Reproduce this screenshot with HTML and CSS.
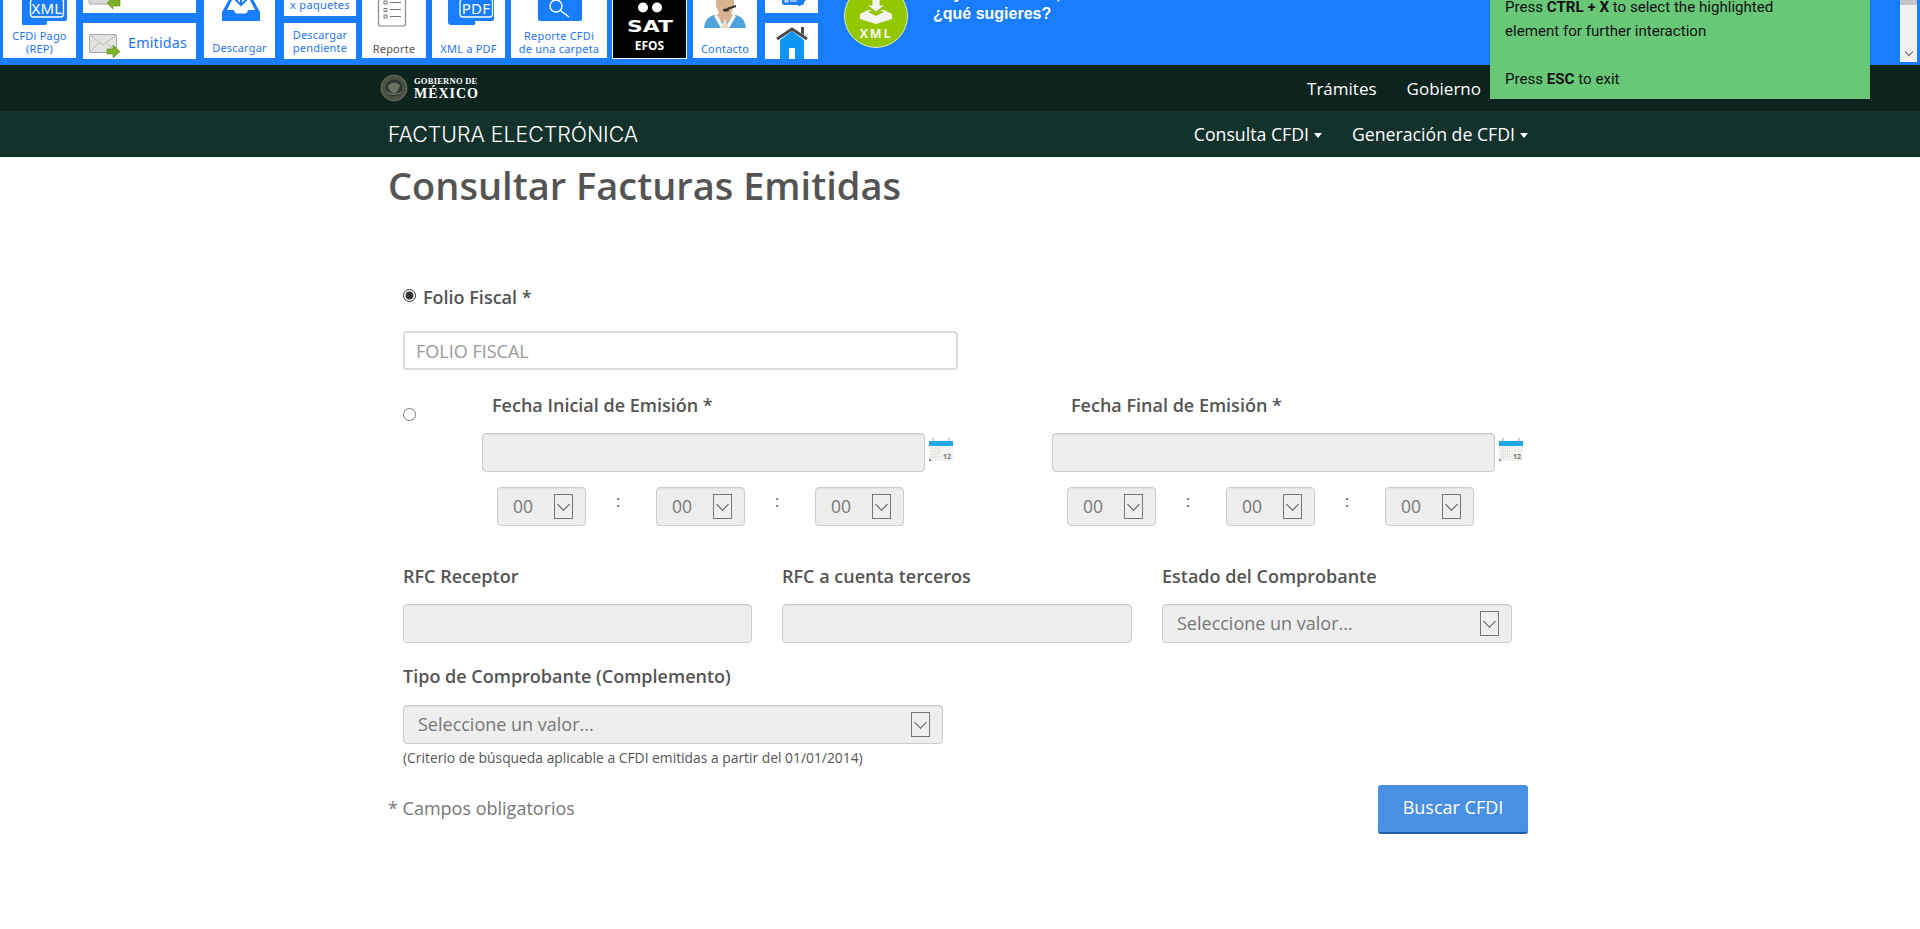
FILE: index.html
```html
<!DOCTYPE html>
<html lang="es">
<head>
<meta charset="utf-8">
<title>Consultar Facturas Emitidas</title>
<link rel="stylesheet" href="styles.css">
</head>
<body>
<header class="strip">
  <a class="tile w73 ml3">
    <svg class="ico" width="73" height="29" viewBox="0 0 73 29"><path class="bl" d="M20 -8h42a2 2 0 0 1 2 2v25a2 2 0 0 1-2 2H44v2a2 2 0 0 1-2 2H22a2 2 0 0 1-3-2V-6a2 2 0 0 1 1-2z"/><rect x="27.5" y="-1" width="33" height="18" rx="3" fill="none" stroke="#fff" stroke-width="1.3"/><text x="44" y="14" class="t-ico">XML</text></svg>
    <span class="lab">CFDi Pago<br>(REP)</span>
  </a>
  <div class="stack w113 ml7">
    <div class="box h13">
      <svg width="113" height="13" viewBox="0 0 113 13"><rect x="6" y="-12" width="27" height="16" rx="1" fill="#d8d8d4" stroke="#aaa"/><path d="M24 3l6-6v3h7v6h-7v3z" fill="#7fb32a" stroke="#5a8a1c" stroke-width=".6"/></svg>
    </div>
    <div class="box h36 rowbox">
      <svg width="37" height="24" viewBox="0 0 37 24"><rect x=".5" y=".5" width="27" height="18" rx="1" fill="#e2e2de" stroke="#aaa"/><path d="M1 1l13 10L27 1M1 18l9-9M27 18l-9-9" fill="none" stroke="#bbb"/><path d="M18 15h6v-4l7 6.500-7 6.500v-4h-6z" fill="#7fb32a" stroke="#5a8a1c" stroke-width=".6"/></svg>
      <span class="lab-big">Emitidas</span>
    </div>
  </div>
  <a class="tile w71 ml8">
    <svg class="ico" width="71" height="41" viewBox="0 0 71 41"><path class="bl" d="M18 12L28-6h18l10 18v9H18z"/><path d="M23 10L31-6h12l8 16h-7c-.5 2.500-1.500 3.500-3 3.500h-8c-1.500 0-2.500-1-3-3.500z" fill="#fff"/><path d="M31-1l6 6 6-6" fill="none" stroke="#187EFF" stroke-width="2"/><path d="M37-6v10" stroke="#187EFF" stroke-width="2"/></svg>
    <span class="lab pb4">Descargar</span>
  </a>
  <div class="stack w72 ml9">
    <div class="box h16 clab">x paquetes</div>
    <div class="box h36 clab2">Descargar<br>pendiente</div>
  </div>
  <a class="tile w64 ml6">
    <svg class="ico" width="64" height="42" viewBox="0 0 64 42"><rect x="16.500" y="-10" width="27" height="36" rx="2" fill="#fff" stroke="#888" stroke-width="1.200"/><path d="M22 1h3v3h-3zM22 8.500h3v3h-3zM22 15h3v3h-3z" fill="none" stroke="#777"/><path d="M28 2.500h11M28 9.500h11M28 16.500h11" stroke="#777" stroke-width="1.200"/></svg>
    <span class="lab gray">Reporte</span>
  </a>
  <a class="tile w73 ml6">
    <svg class="ico" width="73" height="42" viewBox="0 0 73 42"><path class="bl" d="M18-8h42a2 2 0 0 1 2 2v25a2 2 0 0 1-2 2H43v1a2 2 0 0 1-2 3H19a3 3 0 0 1-3-2V-6a2 2 0 0 1 2-2z"/><rect x="28" y="-1" width="32.500" height="18" rx="3" fill="none" stroke="#fff" stroke-width="1.300"/><text x="44" y="14" class="t-ico">PDF</text></svg>
    <span class="lab">XML a PDF</span>
  </a>
  <a class="tile w96 ml6">
    <svg class="ico" width="96" height="29" viewBox="0 0 96 29"><rect class="bl" x="27" y="-8" width="44" height="29" rx="2"/><circle cx="45" cy="6" r="6" fill="none" stroke="#fff" stroke-width="1.400"/><path d="M49.500 10.500L58 17" stroke="#fff" stroke-width="1.500"/></svg>
    <span class="lab">Reporte CFDi<br>de una carpeta</span>
  </a>
  <a class="tile sat ml5">
    <svg class="ico" width="73" height="26" viewBox="0 0 73 26"><circle cx="30" cy="1" r="5" fill="#fff"/><circle cx="44" cy="1" r="5" fill="#fff"/><text x="37" y="25" class="t-sat" textLength="46" lengthAdjust="spacingAndGlyphs">SAT</text></svg>
    <span class="efos">EFOS</span>
  </a>
  <a class="tile w64 ml6">
    <svg class="ico" width="64" height="42" viewBox="0 0 64 42"><path d="M11 28c1-8 4-11 10-13l11 3 11-3c6 2 9 5 10 13z" fill="#4ea3dc"/><path d="M23 -2h18v8l-3 7 3 3-9 8-9-8 3-3-3-7z" fill="#d8b28e"/><path d="M24 15l8 13 8-13 3 1-7 12H28l-7-12z" fill="#fff"/><path d="M28 28l4-10 4 10z" fill="#eed6bd"/><path d="M34 9l9-3" stroke="#333" stroke-width="2" fill="none"/><ellipse cx="33" cy="10" rx="3" ry="1.500" fill="#333"/></svg>
    <span class="lab">Contacto</span>
  </a>
  <div class="stack w53 ml8">
    <div class="box h13">
      <svg width="53" height="13" viewBox="0 0 53 13"><path class="bl" d="M17-8h22v11a2 2 0 0 1-2 2H19a2 2 0 0 1-2-2z"/><path d="M20 0h3v2h-3zM25 1h7" stroke="#fff" fill="none"/><path d="M33 6l7-11 3 3-8 8z" class="bl"/></svg>
    </div>
    <div class="box h36 nopad">
      <svg width="53" height="36" viewBox="0 0 53 36"><path d="M12 16L27 6l15 10" fill="none" stroke="#4a4a4a" stroke-width="3"/><path d="M36 4h3v8l-3-2z" fill="#4a4a4a"/><path d="M27 8L15 17v19h9V25h6v11h9V17z" fill="#0b95f5"/></svg>
    </div>
  </div>
  <div class="xml-badge">
    <svg width="60" height="60" viewBox="0 0 60 60"><path d="M14 28l8-4h16l8 4v5l-16 5-16-5z" fill="#f3f3f3"/><path d="M22 26l8 4 8-4-4-2h-8z" fill="#93c800"/><path d="M26 12h8v7h5l-9 7-9-7h5z" fill="#f3f3f3" stroke="#93c800"/><text x="30" y="52" class="t-xml">XML</text></svg>
  </div>
  <p class="suggest">Hay un error ahí,<br>¿qué sugieres?</p>
  <div class="scroll"><span class="thumb"></span><span class="chev"></span></div>
</header>

<div class="tooltip">
  <p>Press <b>CTRL + X</b> to select the highlighted</p>
  <p>element for further interaction</p>
  <p>&nbsp;</p>
  <p>Press <b>ESC</b> to exit</p>
</div>

<nav class="bar-top">
  <div class="inner">
    <a class="brand">
      <svg width="28" height="28" viewBox="0 0 28 28"><circle cx="14" cy="14" r="13.500" fill="#4b5243"/><circle cx="14" cy="14" r="12.500" fill="none" stroke="#8e947e" stroke-dasharray="1 1.500"/><circle cx="14" cy="14" r="8.500" fill="#2b362c"/><path d="M8 12c3-4 8-5 12-1-1 5-3 8-6 8s-5-3-6-7z" fill="#6d7361"/><path d="M7 18c4 3 10 3 14 0" stroke="#8e947e" fill="none"/></svg>
      <span class="brand-txt"><span class="b1">GOBIERNO DE</span><span class="b2">MÉXICO</span></span>
    </a>
    <div class="links"><a>Trámites</a><a>Gobierno</a></div>
  </div>
</nav>
<nav class="bar-sub">
  <div class="inner">
    <a class="title">FACTURA ELECTRÓNICA</a>
    <div class="links l2"><a class="caret">Consulta CFDI</a><a class="caret">Generación de CFDI</a></div>
  </div>
</nav>

<main class="page">
  <h1>Consultar Facturas Emitidas</h1>
  <form class="form">
    <div class="radio-row">
      <input type="radio" name="mode" checked>
      <label class="lbl lb0">Folio Fiscal *</label>
    </div>
    <input class="field folio" type="text" placeholder="FOLIO FISCAL">

    <div class="date-grid">
      <input class="radio2" type="radio" name="mode">
      <div class="date-col">
        <label class="lbl lb1">Fecha Inicial de Emisión *</label>
        <div class="date-line">
          <div class="field off"></div>
          <svg class="cal" width="24" height="23" viewBox="0 0 24 23"><rect y="3" width="24" height="20" fill="#f2f2ee"/><rect y="3" width="24" height="5" fill="#1fa8f0"/><path d="M4 0v4M20 0v4" stroke="#999"/><path d="M2 10h9M2 13h9M2 16h9M2 19h9" stroke="#ccc" stroke-dasharray="1 1"/><text x="18" y="21" class="t-cal">12</text><path d="M0 20l3 3H0z" fill="#888"/></svg>
        </div>
        <div class="time-row">
          <div class="select"><span>00</span><i class="arr"></i></div><b class="colon">:</b>
          <div class="select"><span>00</span><i class="arr"></i></div><b class="colon">:</b>
          <div class="select"><span>00</span><i class="arr"></i></div>
        </div>
      </div>
      <div class="date-col">
        <label class="lbl lb2">Fecha Final de Emisión *</label>
        <div class="date-line">
          <div class="field off"></div>
          <svg class="cal" width="24" height="23" viewBox="0 0 24 23"><rect y="3" width="24" height="20" fill="#f2f2ee"/><rect y="3" width="24" height="5" fill="#1fa8f0"/><path d="M4 0v4M20 0v4" stroke="#999"/><path d="M2 10h9M2 13h9M2 16h9M2 19h9" stroke="#ccc" stroke-dasharray="1 1"/><text x="18" y="21" class="t-cal">12</text><path d="M0 20l3 3H0z" fill="#888"/></svg>
        </div>
        <div class="time-row">
          <div class="select"><span>00</span><i class="arr"></i></div><b class="colon">:</b>
          <div class="select"><span>00</span><i class="arr"></i></div><b class="colon">:</b>
          <div class="select"><span>00</span><i class="arr"></i></div>
        </div>
      </div>
    </div>

    <div class="three">
      <div><label class="lbl">RFC Receptor</label><div class="field off mt15"></div></div>
      <div><label class="lbl">RFC a cuenta terceros</label><div class="field off mt15"></div></div>
      <div><label class="lbl">Estado del Comprobante</label><div class="select wide mt15"><span>Seleccione un valor...</span><i class="arr"></i></div></div>
    </div>

    <div class="tipo">
      <label class="lbl">Tipo de Comprobante (Complemento)</label>
      <div class="select wide mt16"><span>Seleccione un valor...</span><i class="arr"></i></div>
    </div>
    <p class="note">(Criterio de búsqueda aplicable a CFDI emitidas a partir del 01/01/2014)</p>
  </form>
  <div class="foot">
    <span class="req">* Campos obligatorios</span>
    <button class="btn" type="button">Buscar CFDI</button>
  </div>
</main>
</body>
</html>
```
FILE: styles.css
```css
* { box-sizing: border-box; }
html, body { margin: 0; padding: 0; background: #fff; }
body { font-family: "Open Sans", "Noto Sans", sans-serif; color: #545454; height: 929px; overflow: hidden; position: relative; }
p { margin: 0; }

/* top toolbar */
.strip { display: flex; align-items: flex-start; height: 65px; background: #187EFF; position: relative; overflow: hidden; }
.bl { fill: #187EFF; }
.tile { display: flex; flex-direction: column; height: 58px; background: #fff; flex: none; overflow: hidden; }
.ico { display: block; flex: 1 0 auto; }
.lab { font: 11px/13px "Noto Sans", sans-serif; color: #1f74f5; text-align: center; padding-bottom: 3px; letter-spacing: .2px; white-space: nowrap; }
.lab.pb4 { padding-bottom: 4px; }
.lab.gray { color: #59514d; }
.stack { display: flex; flex-direction: column; justify-content: space-between; height: 59px; flex: none; }
.box { background: #fff; overflow: hidden; }
.box svg { display: block; }
.h13 { height: 13px; }
.h16 { height: 16px; margin-bottom: 7px; }
.h36 { height: 36px; margin-top: auto; }
.rowbox { display: flex; align-items: flex-start; padding: 11px 0 0 6px; }
.lab-big { font: 14.300px/18px "Noto Sans", sans-serif; color: #1f74f5; margin-left: 2px; letter-spacing: .2px; }
.clab { font: 11px/10px "Noto Sans", sans-serif; color: #1f74f5; text-align: center; letter-spacing: .3px; }
.clab2 { font: 11px/13px "Noto Sans", sans-serif; color: #1f74f5; text-align: center; padding-top: 5px; letter-spacing: .2px; }
.w53 { width: 53px; } .w64 { width: 64px; } .w71 { width: 71px; } .w72 { width: 72px; }
.w73 { width: 73px; } .w96 { width: 96px; } .w113 { width: 113px; }
.ml3 { margin-left: 3px; } .ml5 { margin-left: 5px; } .ml6 { margin-left: 6px; } .ml7 { margin-left: 7px; } .ml8 { margin-left: 8px; } .ml9 { margin-left: 9px; }
.t-ico { font: 15px "Noto Sans", sans-serif; fill: #fff; text-anchor: middle; letter-spacing: .2px; }
.sat { width: 75px; height: 59px; background: #000; border: 1px solid #fff; border-top: 0; }
.t-sat { font: 900 15px "DejaVu Sans", sans-serif; fill: #fff; text-anchor: middle; }
.efos { font: 700 12px/14px "Noto Sans", sans-serif; color: #fff; text-align: center; padding-bottom: 5px; }
.xml-badge { position: relative; width: 64px; height: 64px; margin: -16px 0 0 26px; flex: none; border-radius: 50%; background: #93c800; border: 1px solid #dfe9b8; display: flex; align-items: center; justify-content: center; }
.t-xml { font: 700 12.500px "Open Sans", sans-serif; fill: #f6f6f6; text-anchor: middle; letter-spacing: 1.800px; }
.suggest { font: 700 16px/20px "Liberation Sans", Arial, sans-serif; color: #fff; margin: -16px 0 0 25px; white-space: nowrap; }
.scroll { width: 17px; height: 62px; background: #f1f1f1; margin-left: auto; margin-right: 3px; flex: none; display: flex; flex-direction: column; justify-content: space-between; align-items: center; padding-bottom: 7px; }
.thumb { width: 17px; height: 5px; background: #c4c4c4; }
.chev { width: 6px; height: 6px; border-right: 1.500px solid #666; border-bottom: 1.500px solid #666; transform: rotate(45deg); }

/* overlay tooltip */
.tooltip { position: absolute; z-index: 5; left: 1490px; top: 0; width: 380px; height: 99px; background: #69c778; padding: 0 15px 8px; display: flex; flex-direction: column; justify-content: flex-end; overflow: hidden; font: 15.100px/24px "Roboto", sans-serif; color: #111; }
.tooltip b { font-weight: 700; }

/* nav bars */
.inner { width: 1140px; margin-left: 388px; height: 100%; display: flex; align-items: center; justify-content: space-between; }
.bar-top { height: 46px; background: #0C231E; }
.bar-sub { height: 46px; background: #13322B; }
.links { display: flex; gap: 30px; font-size: 17px; color: #fff; padding-right: 47px; }
.links.l2 { padding-right: 0; font-size: 17.700px; }
.brand { display: flex; align-items: center; gap: 6px; margin-left: -8px; }
.brand svg { display: block; }
.brand-txt { display: flex; flex-direction: column; font-family: "Liberation Serif", serif; font-weight: 700; color: #fff; }
.b1 { font-size: 8.500px; line-height: 11px; letter-spacing: .25px; }
.b2 { font-size: 14px; line-height: 13px; letter-spacing: .95px; }
.title { font: 300 21.300px/24px "Inter", sans-serif; color: #fff; }
.caret::after { content: ""; display: inline-block; margin-left: 5px; vertical-align: 3px; border-top: 5px solid #fff; border-left: 4px solid transparent; border-right: 4px solid transparent; }

/* page */
.page { width: 1140px; margin-left: 388px; }
h1 { margin: 5px 0 0; font-size: 38px; line-height: 46px; font-weight: 600; color: #545454; }
.form { padding-left: 15px; }
.lbl { display: block; font-size: 18px; line-height: 22px; padding-bottom: 2px; font-weight: 600; color: #545454; }
.lb0 { padding: 1px 0 1px; }
.radio-row { display: flex; gap: 7px; margin-top: 77px; height: 24px; }
input[type=radio] { margin: 0; flex: none; width: 13px; height: 13px; accent-color: #333; }
.radio-row input { margin-top: 4px; }
.field { display: block; height: 39px; border: 2px solid #dcdcdc; border-radius: 4px; background: #fff; width: 100%; }
.folio { width: 555px; margin-top: 22px; padding: 0 11px; font: 18px "Open Sans", sans-serif; color: #555; outline: 0; }
.folio::placeholder { color: #999; opacity: 1; }
.off { background: #eee; border-width: 1px; border-color: #ccc; box-shadow: inset 0 1px 1px rgba(0,0,0,.06); }
.date-grid { display: grid; grid-template-columns: 79px 570px 1fr; margin-top: 24px; }
.radio2 { margin-top: 14px !important; }
.lb1 { margin-left: 10px; }
.lb2 { margin-left: 19px; }
.date-line { display: flex; align-items: flex-start; margin-top: 15px; gap: 4px; }
.date-line .field { width: 443px; }
.cal { margin-top: 5px; display: block; flex: none; }
.t-cal { font: 700 7px "Noto Sans", sans-serif; fill: #777; text-anchor: middle; }
.time-row { display: grid; grid-template-columns: 89px 70px 89px 70px 89px; margin: 15px 0 0 15px; width: 407px; }
.colon { font-weight: 400; font-size: 16px; line-height: 28px; text-align: center; color: #555; padding-right: 6px; }
.select { position: relative; display: flex; align-items: center; height: 39px; background: #eee; border: 1px solid #ccc; border-radius: 4px; padding-left: 15px; font-size: 17.500px; color: #777; justify-content: space-between; padding-right: 12px; box-shadow: inset 0 1px 1px rgba(0,0,0,.05); }
.select span { margin-top: -2px; }
.select.wide { font-size: 18px; padding-left: 14px; padding-right: 12px; }
.arr { position: relative; display: block; flex: none; width: 19px; height: 25px; border: 1px solid #767676; background: #efefef; }
.arr::after { content: ""; position: absolute; left: 4px; top: 5px; width: 8px; height: 8px; border-right: 1.500px solid #555; border-bottom: 1.500px solid #555; transform: rotate(45deg); }
.three { display: grid; grid-template-columns: 349px 350px 350px; column-gap: 30px; margin-top: 39px; }
.mt15 { margin-top: 15px; }
.mt16 { margin-top: 16px; }
.tipo { width: 540px; margin-top: 22px; }
.note { margin-top: 4px; font-size: 13.850px; line-height: 20px; color: #555; white-space: nowrap; }
.foot { display: flex; justify-content: space-between; align-items: center; margin-top: 17px; }
.req { font-size: 18px; color: #777; margin-bottom: 3px; }
.btn { width: 150px; height: 49px; padding: 0 0 3px; background: #4a90e2; color: #fff; font: 18px "Open Sans", sans-serif; border: 0; border-bottom: 2px solid #1c5ea8; border-radius: 3px; }
```
